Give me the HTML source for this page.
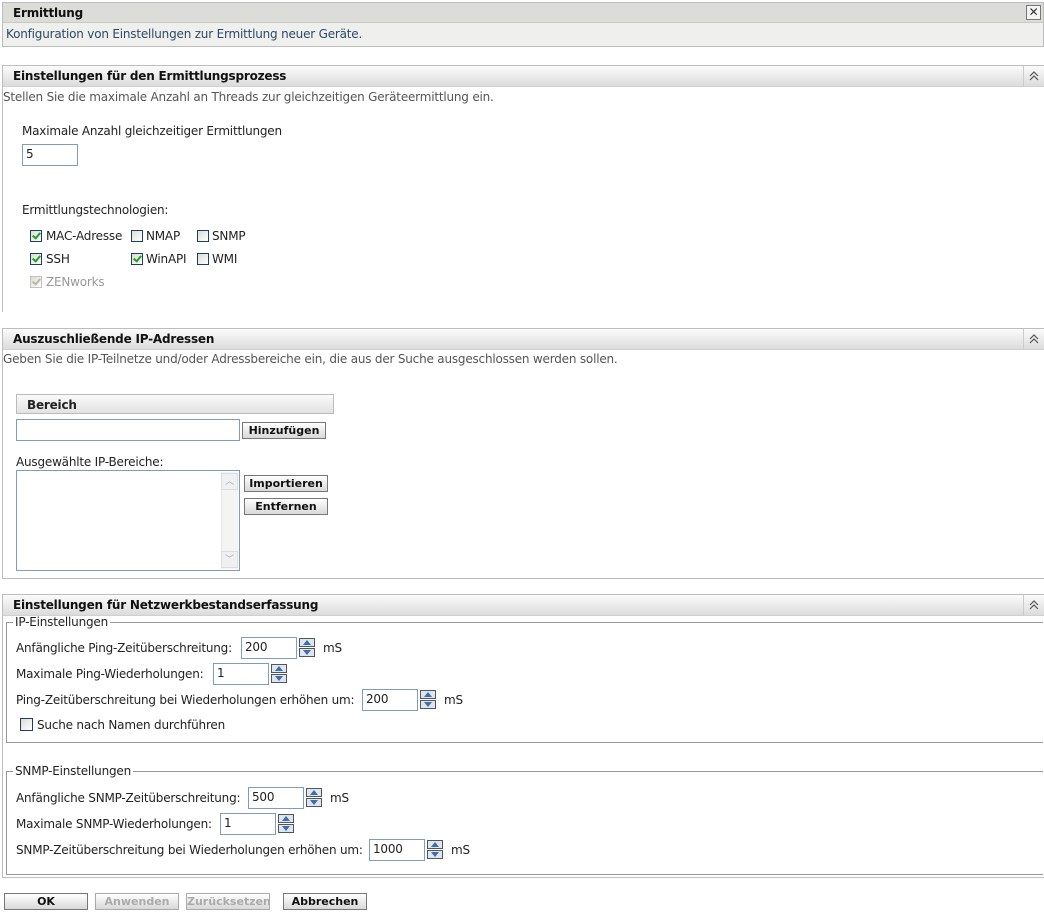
<!DOCTYPE html>
<html><head><meta charset="utf-8"><style>
body{margin:0;width:1044px;height:912px;background:#fff;font-family:"DejaVu Sans","Liberation Sans",sans-serif;font-size:12px;letter-spacing:-0.2px;color:#222;position:relative;overflow:hidden}
.a{position:absolute;white-space:nowrap}
.box{position:absolute;border:1px solid #bdbdbd;box-sizing:border-box}
.hdr{position:absolute;left:0;right:0;top:0;height:21px;background:linear-gradient(#fbfbfb,#dcdcdc);border-bottom:1px solid #d0d0d0;font-weight:bold;font-size:12px;padding:3px 0 0 10px;box-sizing:border-box;color:#111}
.col{position:absolute;right:0;top:0;width:20px;height:21px;border-left:1px solid #ccc}
.col svg{position:absolute;left:5px;top:5px}
.desc{color:#555}
.inp{position:absolute;border:1px solid #7f9db9;background:#fff;box-sizing:border-box;padding:2px 3px;font-size:12px}
.cb{position:absolute;width:12px;height:12px;border:1px solid #1c3c6c;box-sizing:border-box;background:linear-gradient(135deg,#dcdcd4,#fff)}
.cb.c::after{content:"";position:absolute;left:3px;top:0px;width:3px;height:6px;border:solid #21a121;border-width:0 2px 2px 0;transform:rotate(40deg)}
.cb.d{border-color:#c4c2b8}.cb.d::after{border-color:#b8b6ae}
.btn{position:absolute;height:17px;border:1px solid #777;box-sizing:border-box;background:linear-gradient(#fff,#d8d8d8);font-weight:bold;font-size:11px;text-align:center;line-height:15px;color:#111;letter-spacing:0}
.btn.dis{color:#aaa;border-color:#aaa}
.spin{position:absolute;width:16px;height:19px}
.spin i{display:block;width:16px;height:9px;border:1px solid #555;box-sizing:border-box;background:#dde6f0;position:relative;margin-bottom:1px}
.spin i::after{content:"";position:absolute;left:3px;top:1px;border-left:4px solid transparent;border-right:4px solid transparent}
.spin i.u::after{border-bottom:5px solid #3c6ea8}
.spin i.dn::after{border-top:5px solid #3c6ea8;top:1px}
fieldset{position:absolute;border:1px solid #999;border-width:1px 0 1px 1px;margin:0;padding:0;box-sizing:border-box}
legend{padding:0 2px;margin-left:6px;font-size:12px;color:#222}
</style></head><body>

<div class="box" style="left:2px;top:2px;width:1042px;height:45px;background:#efefed">
 <div style="position:absolute;left:0;right:0;top:0;height:20px;background:#dcdcd8;border-bottom:1px solid #c8c8c8;font-weight:bold;padding:3px 0 0 10px;box-sizing:border-box;color:#111">Ermittlung</div>
 <div style="position:absolute;right:2px;top:2px;width:13px;height:13px;border:1px solid #777;background:#f4f4f4;font-size:12px;line-height:12px;text-align:center;color:#333">✕</div>
 <div class="a" style="left:3px;top:24px;color:#2c4a66">Konfiguration von Einstellungen zur Ermittlung neuer Geräte.</div>
</div>

<!-- Section 1 -->
<div class="box" style="left:2px;top:65px;width:1042px;height:247px;border-right:none;border-bottom:none">
 <div class="hdr">Einstellungen für den Ermittlungsprozess<div class="col"><svg width="10" height="10" viewBox="0 0 10 10"><path d="M1 5L5 1L9 5M1 9L5 5L9 9" fill="none" stroke="#555" stroke-width="1.2"/></svg></div></div>
 <div class="a desc" style="left:0;top:24px">Stellen Sie die maximale Anzahl an Threads zur gleichzeitigen Geräteermittlung ein.</div>
 <div class="a" style="left:19px;top:58px">Maximale Anzahl gleichzeitiger Ermittlungen</div>
 <div class="inp" style="left:19px;top:78px;width:56px;height:22px">5</div>
 <div class="a" style="left:19px;top:137px">Ermittlungstechnologien:</div>
 <div class="cb c" style="left:27px;top:164px"></div><div class="a" style="left:43px;top:163px">MAC-Adresse</div>
 <div class="cb" style="left:128px;top:164px"></div><div class="a" style="left:143px;top:163px">NMAP</div>
 <div class="cb" style="left:194px;top:164px"></div><div class="a" style="left:209px;top:163px">SNMP</div>
 <div class="cb c" style="left:27px;top:187px"></div><div class="a" style="left:43px;top:186px">SSH</div>
 <div class="cb c" style="left:128px;top:187px"></div><div class="a" style="left:143px;top:186px">WinAPI</div>
 <div class="cb" style="left:194px;top:187px"></div><div class="a" style="left:209px;top:186px">WMI</div>
 <div class="cb c d" style="left:27px;top:210px"></div><div class="a" style="left:43px;top:209px;color:#999">ZENworks</div>
</div>

<!-- Section 2 -->
<div class="box" style="left:2px;top:328px;width:1042px;height:251px;border-right:none">
 <div class="hdr">Auszuschließende IP-Adressen<div class="col"><svg width="10" height="10" viewBox="0 0 10 10"><path d="M1 5L5 1L9 5M1 9L5 5L9 9" fill="none" stroke="#555" stroke-width="1.2"/></svg></div></div>
 <div class="a desc" style="left:0;top:23px">Geben Sie die IP-Teilnetze und/oder Adressbereiche ein, die aus der Suche ausgeschlossen werden sollen.</div>
 <div style="position:absolute;left:13px;top:65px;width:318px;height:20px;border:1px solid #bbb;box-sizing:border-box;background:linear-gradient(#fafafa,#e2e2e2);font-weight:bold;padding:3px 0 0 10px">Bereich</div>
 <div class="inp" style="left:13px;top:90px;width:224px;height:22px"></div>
 <div class="btn" style="left:239px;top:93px;width:84px">Hinzufügen</div>
 <div class="a" style="left:13px;top:126px">Ausgewählte IP-Bereiche:</div>
 <div class="inp" style="left:13px;top:141px;width:224px;height:101px">
  <div style="position:absolute;right:1px;top:1px;width:16px;height:97px;background:#f4f4f2;border-left:1px solid #e6e6e6"></div>
  <div style="position:absolute;right:1px;top:2px;width:15px;height:15px;background:#eef0f2;border:1px solid #ddd;color:#aab;font-size:9px;text-align:center">︿</div>
  <div style="position:absolute;right:1px;bottom:2px;width:15px;height:15px;background:#eef0f2;border:1px solid #ddd;color:#aab;font-size:9px;text-align:center">﹀</div>
 </div>
 <div class="btn" style="left:241px;top:146px;width:84px">Importieren</div>
 <div class="btn" style="left:241px;top:169px;width:84px">Entfernen</div>
</div>

<!-- Section 3 -->
<div class="box" style="left:2px;top:594px;width:1042px;height:284px;border-right:none">
 <div class="hdr">Einstellungen für Netzwerkbestandserfassung<div class="col"><svg width="10" height="10" viewBox="0 0 10 10"><path d="M1 5L5 1L9 5M1 9L5 5L9 9" fill="none" stroke="#555" stroke-width="1.2"/></svg></div></div>
 <fieldset style="left:3px;top:20px;width:1037px;height:128px"><legend>IP-Einstellungen</legend></fieldset>
 <div class="a" style="left:13px;top:46px">Anfängliche Ping-Zeitüberschreitung:</div>
 <div class="inp" style="left:238px;top:42px;width:56px;height:22px">200</div>
 <div class="spin" style="left:296px;top:43px"><i class="u"></i><i class="dn"></i></div>
 <div class="a" style="left:320px;top:46px">mS</div>
 <div class="a" style="left:13px;top:72px">Maximale Ping-Wiederholungen:</div>
 <div class="inp" style="left:210px;top:68px;width:56px;height:22px">1</div>
 <div class="spin" style="left:268px;top:69px"><i class="u"></i><i class="dn"></i></div>
 <div class="a" style="left:13px;top:98px">Ping-Zeitüberschreitung bei Wiederholungen erhöhen um:</div>
 <div class="inp" style="left:359px;top:94px;width:56px;height:22px">200</div>
 <div class="spin" style="left:417px;top:95px"><i class="u"></i><i class="dn"></i></div>
 <div class="a" style="left:441px;top:98px">mS</div>
 <div class="cb" style="left:17px;top:123px;width:13px;height:13px"></div>
 <div class="a" style="left:34px;top:123px">Suche nach Namen durchführen</div>
 <fieldset style="left:3px;top:169px;width:1037px;height:111px"><legend>SNMP-Einstellungen</legend></fieldset>
 <div class="a" style="left:13px;top:196px">Anfängliche SNMP-Zeitüberschreitung:</div>
 <div class="inp" style="left:245px;top:192px;width:56px;height:22px">500</div>
 <div class="spin" style="left:303px;top:193px"><i class="u"></i><i class="dn"></i></div>
 <div class="a" style="left:327px;top:196px">mS</div>
 <div class="a" style="left:13px;top:222px">Maximale SNMP-Wiederholungen:</div>
 <div class="inp" style="left:217px;top:218px;width:56px;height:22px">1</div>
 <div class="spin" style="left:275px;top:219px"><i class="u"></i><i class="dn"></i></div>
 <div class="a" style="left:13px;top:248px">SNMP-Zeitüberschreitung bei Wiederholungen erhöhen um:</div>
 <div class="inp" style="left:366px;top:244px;width:56px;height:22px">1000</div>
 <div class="spin" style="left:424px;top:245px"><i class="u"></i><i class="dn"></i></div>
 <div class="a" style="left:448px;top:248px">mS</div>
</div>

<div class="btn" style="left:4px;top:893px;width:84px">OK</div>
<div class="btn dis" style="left:95px;top:893px;width:84px">Anwenden</div>
<div class="btn dis" style="left:186px;top:893px;width:84px">Zurücksetzen</div>
<div class="btn" style="left:283px;top:893px;width:84px">Abbrechen</div>
</body></html>
